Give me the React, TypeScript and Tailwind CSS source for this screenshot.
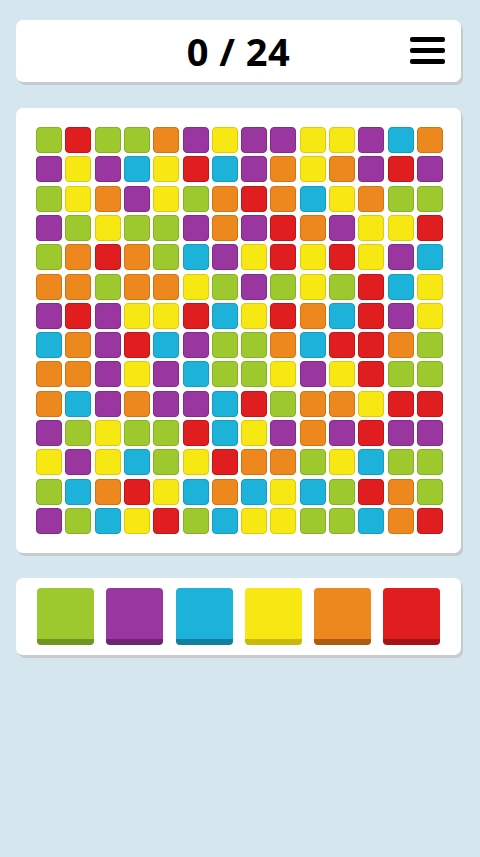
import React from "react";

const ROWS = [
  "GRGGOPYPPYYPBO",
  "PYPBYRBPOYOPRP",
  "GYOPYGOROBYOGG",
  "PGYGGPOPROPYYR",
  "GOROGBPYRYRYPB",
  "OOGOOYGPGYGRBY",
  "PRPYYRBYROBRPY",
  "BOPRBPGGOBRROG",
  "OOPYPBGGYPYRGG",
  "OBPOPPBRGOOYRR",
  "PGYGGRBYPOPRPP",
  "YPYBGYROOGYBGG",
  "GBORYBOBYBGROG",
  "PGBYRGBYYGGBOR",
];

const CELL: Record<string, string> = {
  G: "bg-[#9dc92f] border-[#86b125]",
  P: "bg-[#9a369f] border-[#842a89]",
  B: "bg-[#1cb2d9] border-[#159cc0]",
  Y: "bg-[#f7e813] border-[#dccd0c]",
  O: "bg-[#ed881e] border-[#d27314]",
  R: "bg-[#e01d1f] border-[#c11419]",
};

const BUTTONS = [
  "bg-[#9dc92f] border-[#6f9620]",
  "bg-[#9a369f] border-[#6d2472]",
  "bg-[#1cb2d9] border-[#127f9c]",
  "bg-[#f7e813] border-[#c8b90b]",
  "bg-[#ed881e] border-[#ae5b12]",
  "bg-[#e01d1f] border-[#a3131a]",
];

export default function App() {
  const [moves] = React.useState(0);

  return (
    <div className="min-h-[857px] w-[480px] bg-[#d5e6ef] pt-[20px] font-['Open_Sans',sans-serif]">
      <div className="ml-[16px] flex h-[62px] w-[445px] items-center justify-center rounded-[7px] bg-white shadow-[2px_3px_0_#c5cbcf] relative">
        <span className="text-[38px] font-bold leading-none text-black tracking-[0.5px]">
          {moves} / 24
        </span>
        <button className="absolute right-[16px] top-[17px] flex w-[35px] flex-col gap-[6px]">
          <span className="h-[5px] w-full rounded-[2px] bg-black" />
          <span className="h-[5px] w-full rounded-[2px] bg-black" />
          <span className="h-[5px] w-full rounded-[2px] bg-black" />
        </button>
      </div>

      <div className="ml-[16px] mt-[26px] w-[445px] rounded-[7px] bg-white pl-[20px] pt-[19px] pb-[19px] shadow-[2px_3px_0_#c5cbcf]">
        <div className="grid h-[407px] w-[407px] grid-cols-[repeat(14,1fr)] grid-rows-[repeat(14,1fr)] gap-[3.3px]">
          {ROWS.map((row, r) =>
            row.split("").map((c, i) => (
              <div
                key={r + "-" + i}
                className={"rounded-[4px] border " + CELL[c]}
              />
            ))
          )}
        </div>
      </div>

      <div className="ml-[16px] mt-[25px] flex h-[77px] w-[445px] items-center gap-[12.3px] rounded-[7px] bg-white pl-[21px] shadow-[2px_3px_0_#c5cbcf]">
        {BUTTONS.map((b, i) => (
          <button
            key={i}
            className={"h-[57px] w-[57px] rounded-[4px] border-b-[6px] " + b}
          />
        ))}
      </div>
    </div>
  );
}
